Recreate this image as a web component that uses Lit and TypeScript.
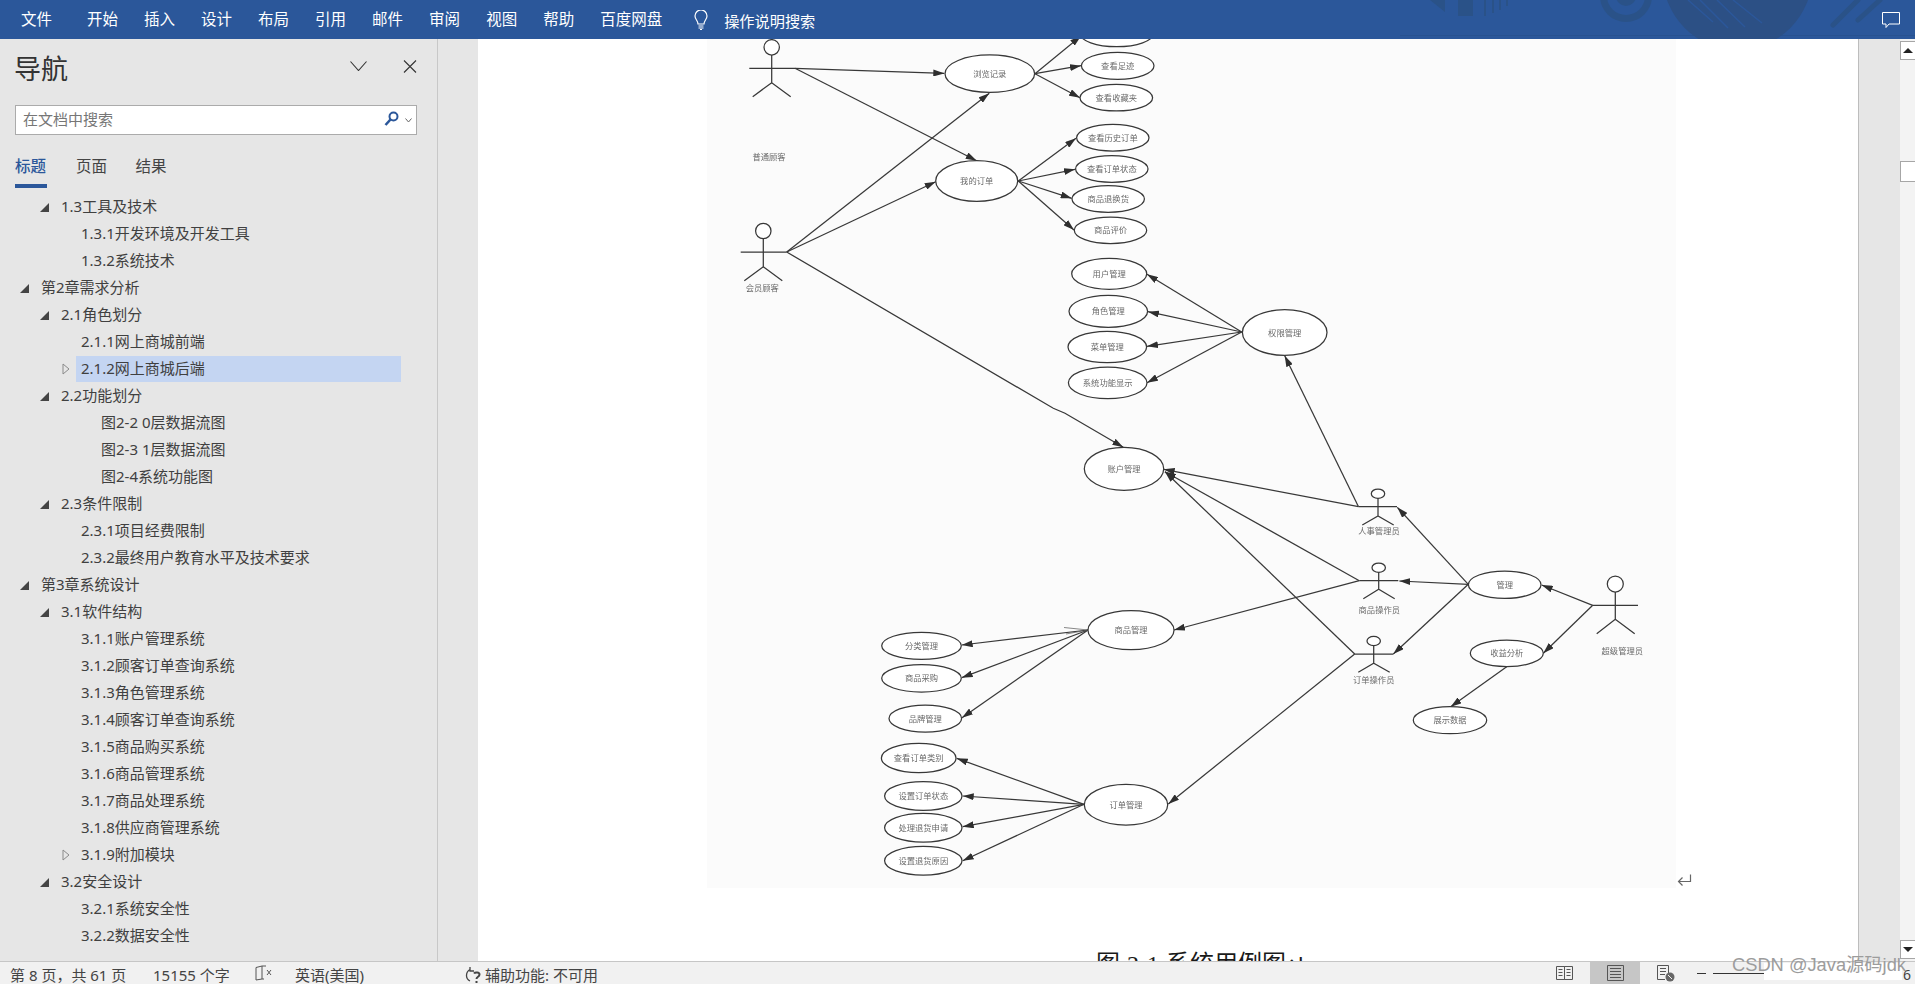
import { LitElement, html, css, svg } from "lit";
import { customElement } from "lit/decorators.js";

const MENU = ["开始", "插入", "设计", "布局", "引用", "邮件", "审阅", "视图", "帮助", "百度网盘"];

type Row = [number, string, ("open" | "closed" | "")?, boolean?];
const TREE: Row[] = [
  [2, "1.3工具及技术", "open"],
  [3, "1.3.1开发环境及开发工具"],
  [3, "1.3.2系统技术"],
  [1, "第2章需求分析", "open"],
  [2, "2.1角色划分", "open"],
  [3, "2.1.1网上商城前端"],
  [3, "2.1.2网上商城后端", "closed", true],
  [2, "2.2功能划分", "open"],
  [4, "图2-2 0层数据流图"],
  [4, "图2-3 1层数据流图"],
  [4, "图2-4系统功能图"],
  [2, "2.3条件限制", "open"],
  [3, "2.3.1项目经费限制"],
  [3, "2.3.2最终用户教育水平及技术要求"],
  [1, "第3章系统设计", "open"],
  [2, "3.1软件结构", "open"],
  [3, "3.1.1账户管理系统"],
  [3, "3.1.2顾客订单查询系统"],
  [3, "3.1.3角色管理系统"],
  [3, "3.1.4顾客订单查询系统"],
  [3, "3.1.5商品购买系统"],
  [3, "3.1.6商品管理系统"],
  [3, "3.1.7商品处理系统"],
  [3, "3.1.8供应商管理系统"],
  [3, "3.1.9附加模块", "closed"],
  [2, "3.2安全设计", "open"],
  [3, "3.2.1系统安全性"],
  [3, "3.2.2数据安全性"],
];

// ellipses: cx, cy, rx, ry, label
const ELLIPSES: [number, number, number, number, string][] = [
  [989.8, 73.7, 44.8, 18.7, "浏览记录"],
  [976.7, 181, 41, 20.3, "我的订单"],
  [1116.7, 33.4, 36.7, 13.3, ""],
  [1117.7, 65.8, 36.3, 13.5, "查看足迹"],
  [1116.3, 97.7, 36.3, 13.3, "查看收藏夹"],
  [1112.8, 137.7, 36.2, 13.3, "查看历史订单"],
  [1111.8, 169, 36.2, 13.3, "查看订单状态"],
  [1108.2, 199, 36.2, 13.3, "商品退换货"],
  [1110.5, 230.3, 36.2, 13.3, "商品评价"],
  [1109.2, 273.8, 37.5, 15.5, "用户管理"],
  [1108.3, 311.3, 39.3, 16, "角色管理"],
  [1107.3, 347, 39.3, 15.7, "菜单管理"],
  [1107.7, 382.8, 39.3, 15.8, "系统功能显示"],
  [1284.7, 332.5, 42.3, 22.8, "权限管理"],
  [1124, 468.8, 39.7, 21.5, "账户管理"],
  [1504.7, 584.7, 36.3, 13.7, "管理"],
  [1506.8, 653.3, 36.5, 13.3, "收益分析"],
  [1450, 720.2, 36.7, 13.5, "展示数据"],
  [1131, 630.2, 43, 19.5, "商品管理"],
  [921.5, 645.8, 39.8, 13.5, "分类管理"],
  [921.5, 678.3, 39.8, 13.7, "商品采购"],
  [925.3, 718.5, 36.3, 13.5, "品牌管理"],
  [918.7, 758, 37.3, 14.7, "查看订单类别"],
  [923.3, 796, 38.7, 14.3, "设置订单状态"],
  [923.3, 827.7, 38.7, 14.3, "处理退货申请"],
  [923.3, 860.7, 38.7, 14.3, "设置退货原因"],
  [1126, 804.7, 41.7, 20.3, "订单管理"],
];

// arrows: polyline points, ending with an arrowhead
const ARROWS: number[][] = [
  [795, 68.3, 944.3, 73.3],
  [795, 68.3, 976.7, 160.7],
  [786.7, 252, 989.3, 93.3],
  [786.7, 252, 935.7, 181.7],
  [786.7, 252, 1053.3, 408.3, 1065, 413.3, 1123.3, 447.3],
  [1035, 73.7, 1081, 36],
  [1035, 73.7, 1081, 65.7],
  [1035, 73.7, 1080, 97.7],
  [1018.3, 181, 1076, 138.3],
  [1018.3, 181, 1075, 169.3],
  [1018.3, 181, 1071.7, 198.3],
  [1018.3, 181, 1074, 230],
  [1241.7, 332, 1147, 274.3],
  [1241.7, 332, 1148, 311.7],
  [1241.7, 332, 1147, 346.3],
  [1241.7, 332, 1147, 382.7],
  [1358.5, 506.7, 1163.7, 469.3],
  [1358.5, 506.7, 1284.7, 355.7],
  [1359.3, 580.7, 1165, 471.7],
  [1359.3, 580.7, 1174, 630],
  [1354.7, 654, 1165, 471.7],
  [1354.7, 654, 1168.3, 804],
  [1468.3, 584.3, 1397.3, 507.3],
  [1468.3, 584.3, 1399.3, 581],
  [1468.3, 584.3, 1393.3, 654],
  [1592.7, 605.3, 1541.7, 585],
  [1592.7, 605.3, 1543.3, 653.3],
  [1506.7, 666.7, 1450.7, 706.7],
  [1088, 630, 961.7, 645],
  [1088, 630, 961.7, 677.7],
  [1088, 630, 962, 717.7],
  [1084, 804.3, 956.7, 758.3],
  [1084, 804.3, 962.7, 796],
  [1084, 804.3, 962.7, 826.7],
  [1084, 804.3, 962.7, 860.7],
];

// actors: head cx, cy, rx, ry, arm x1, x2, arm y, hip y, leg y, leg x1, x2, label x, label y, label
const ACTORS: [number, number, number, number, number, number, number, number, number, number, number, number, number, string][] = [
  [771.7, 47.3, 7.7, 7.7, 749.3, 795, 68.3, 82.7, 96.7, 752.7, 790.7, 769, 157.3, "普通顾客"],
  [763.3, 231, 7.7, 7.7, 740.7, 786.7, 252, 266.7, 280.7, 744.3, 782.3, 762.3, 288, "会员顾客"],
  [1378, 493.7, 6.7, 4.7, 1358.7, 1397, 506.7, 516, 525, 1362.3, 1393.7, 1379, 531, "人事管理员"],
  [1378.7, 567.7, 6.7, 4.7, 1359.3, 1398.3, 580.7, 589.3, 598.7, 1363.3, 1394.7, 1379.3, 610.3, "商品操作员"],
  [1373.7, 641, 6.7, 4.7, 1354.7, 1393.3, 654, 663.3, 672.3, 1358.3, 1389.7, 1373.7, 680, "订单操作员"],
  [1615.3, 584, 8, 8, 1592.7, 1638, 605.3, 619.3, 633.7, 1596.7, 1634.7, 1622.3, 651, "超级管理员"],
];

@customElement("app-root")
export class AppRoot extends LitElement {
  static styles = css`
    :host {
      display: grid;
      position: relative;
      width: 1915px;
      height: 984px;
      overflow: hidden;
      grid-template-rows: 39px 922px 23px;
      font-family: "Noto Sans", "Noto Sans CJK SC", sans-serif;
      color: #3f3f3f;
      background: #e6e6e6;
    }
    .ribbon {
      position: relative;
      display: flex;
      align-items: center;
      background: #2b579a;
      color: #fff;
      font-size: 15.5px;
      padding-left: 21px;
      padding-bottom: 2px;
      box-sizing: border-box;
      overflow: hidden;
    }
    .file { margin-right: 35px; }
    .menu { display: flex; gap: 26px; }
    .bulb { width: 16px; height: 20px; margin: 2px 15px 0 31px; }
    .tell { font-size: 15.2px; position: relative; top: 1px; }
    .deco { position: absolute; left: 1400px; top: 0; width: 515px; height: 39px; }
    .main { display: flex; min-height: 0; overflow: hidden; }
    .nav {
      width: 437px;
      flex: none;
      box-sizing: content-box;
      border-right: 1px solid #c8c8c8;
      background: #e6e6e6;
    }
    .nav-head {
      display: flex;
      align-items: center;
      height: 32px;
      margin: 14px 0 20px;
      padding-left: 14px;
    }
    .nav-title { font-size: 27px; line-height: 32px; color: #333; width: 336px; }
    .chev { width: 17px; height: 10px; margin-right: 36px; margin-top: -6px; }
    .close { width: 14px; height: 13px; margin-top: -6px; }
    .search {
      display: flex;
      align-items: center;
      box-sizing: border-box;
      width: 402px;
      height: 30px;
      margin-left: 15px;
      padding-left: 7px;
      padding-bottom: 3px;
      border: 1px solid #ababab;
      background: #fff;
      color: #767676;
      font-size: 15px;
    }
    .search span { flex: 1; }
    .lens { width: 15px; height: 15px; margin-right: 6px; }
    .drop { width: 7px; height: 5px; margin-right: 4px; margin-top: 3px; }
    .tabs { display: flex; margin: 18px 0 6px 15px; height: 35px; font-size: 15.5px; }
    .tab { width: 61px; line-height: 27px; color: #444; box-sizing: border-box; }
    .tab:nth-child(2) { width: 59.5px; }
    .tab.on { color: #2b579a; }
    .tab.on span { display: inline-block; height: 35px; width: 32px; box-sizing: border-box; border-bottom: 4px solid #2b579a; font-weight: 500; }
    .row { display: flex; box-sizing: border-box; width: 401px; height: 27px; font-size: 15px; line-height: 24px; color: #404040; }
    .l1 { padding-left: 20px; }
    .l2 { padding-left: 40px; }
    .l3 { padding-left: 61px; }
    .l4 { padding-left: 80px; }
    .tw { flex: none; width: 14px; height: 26px; display: flex; align-items: center; }
    .tw svg { display: block; }
    .l3 .tw { width: 15px; }
    .lbl { flex: 1; height: 26px; padding-left: 7px; white-space: nowrap; }
    .l3 .lbl { padding-left: 5px; }
    .lbl.sel { background: #c4d5f2; }
    .gutter { width: 40px; flex: none; background: #e6e6e6; }
    .page { position: relative; width: 1380px; flex: none; background: #fff; overflow: hidden; padding-left: 229px; box-sizing: border-box; }
    .figure { display: flex; }
    .img { width: 969px; height: 849px; flex: none; background: #fbfbfb; overflow: hidden; }
    .img svg { display: block; width: 969px; height: 849px; filter: blur(0.3px); }
    .mark { width: 15px; height: 13px; margin: 835px 0 0 1px; flex: none; }
    .caption {
      margin: 61px 0 0 389px;
      font-family: "Liberation Serif", "Noto Sans CJK SC", serif;
      font-size: 24px;
      line-height: 30px;
      word-spacing: 1px;
      color: #1a1a1a;
      white-space: nowrap;
    }
    .rgut { width: 42px; flex: none; box-sizing: border-box; border-left: 1px solid #bdbdbd; background: #e6e6e6; }
    .sb { width: 15px; flex: none; background: #f3f3f3; display: flex; flex-direction: column; }
    .sb-btn {
      box-sizing: border-box;
      height: 19px;
      background: #fff;
      border: 1px solid #a6a6a6;
      border-right: 0;
      display: flex;
      align-items: center;
      justify-content: center;
    }
    .up { margin-top: 2px; }
    .down { margin-top: auto; margin-bottom: 2px; }
    .up i { border: 5px solid transparent; border-bottom: 5px solid #222; border-top: 0; }
    .down i { border: 5px solid transparent; border-top: 5px solid #222; border-bottom: 0; }
    .thumb { box-sizing: border-box; height: 21px; margin-top: 101px; background: #fff; border: 1px solid #a6a6a6; border-right: 0; }
    .status {
      display: flex;
      align-items: center;
      box-sizing: border-box;
      border-top: 1px solid #c6c6c6;
      background: #f1f1f1;
      padding-left: 10px;
      font-size: 15px;
      color: #444;
      white-space: nowrap;
      position: relative;
    }
    .status > span { padding-top: 3px; }
    .st-page { width: 143px; }
    .st-words { width: 102px; }
    .st-book { width: 40px; height: 16px; display: block; }
    .st-lang { width: 170px; }
    .st-acc { width: 20px; height: 18px; display: block; margin-top: 4px; }
    .views { margin-left: auto; display: flex; align-items: center; height: 22px; }
    .vi { width: 17px; height: 16px; display: block; }
    .cell { width: 50px; height: 22px; margin: 0 17px; background: #c6c6c6; display: flex; align-items: center; justify-content: center; }
    .web { width: 18px; height: 17px; display: block; }
    .minus { width: 9px; height: 1px; background: #333; margin-left: 22px; }
    .slider { position: relative; width: 186px; height: 1px; margin-left: 7px; background: #333; }
    .knob { position: absolute; left: 66px; top: 6px; width: 6px; height: 1px; background: #333; }
    .pct { position: relative; z-index: 2; width: 12px; margin-left: 4px; font-size: 14px; padding-top: 3px; }
    .wm-bg { position: absolute; left: 1764px; top: 963px; width: 138px; height: 17px; background: #fff; }
    .wm {
      position: absolute;
      left: 1732px;
      top: 954px;
      font-family: "Liberation Sans", "Noto Sans CJK SC", sans-serif;
      font-size: 18.3px;
      line-height: 22px;
      color: #9c9c9c;
      white-space: nowrap;
    }
  `;

  private diagram() {
    const lines = ARROWS.map(
      (p) => svg`<polyline points=${p.join(" ")} fill="none" stroke="#383838" stroke-width="1.25" marker-end="url(#ah)"></polyline>`
    );
    const ells = ELLIPSES.map(
      ([cx, cy, rx, ry, t]) => svg`
        <ellipse cx=${cx} cy=${cy} rx=${rx} ry=${ry} fill="#fff" stroke="#383838" stroke-width="1.25"></ellipse>
        <text x=${cx} y=${cy + 3} text-anchor="middle" font-size="8.3" fill="#6a6a6a">${t}</text>`
    );
    const actors = ACTORS.map(
      ([hx, hy, rx, ry, a1, a2, ay, hip, leg, l1, l2, tx, ty, t]) => svg`
        <ellipse cx=${hx} cy=${hy} rx=${rx} ry=${ry} fill="#fff" stroke="#383838" stroke-width="1.25"></ellipse>
        <path d="M${hx} ${hy + ry}V${hip}M${a1} ${ay}H${a2}M${l1} ${leg}L${hx} ${hip}L${l2} ${leg}" fill="none" stroke="#383838" stroke-width="1.25"></path>
        <text x=${tx} y=${ty + 3} text-anchor="middle" font-size="8.3" fill="#6a6a6a">${t}</text>`
    );
    return html`<svg viewBox="707 39 969 849" aria-label="系统用例图">
      <defs>
        <marker id="ah" viewBox="0 0 11 7" markerWidth="11" markerHeight="7" markerUnits="userSpaceOnUse" refX="11" refY="3.5" orient="auto">
          <path d="M0 0L11 3.500L0 7Z" fill="#2e2e2e"></path>
        </marker>
      </defs>
      ${lines}
      <path d="M1064 627.5L1088 630L1066 634" fill="none" stroke="#555" stroke-width="0.7"></path>
      ${ells}${actors}
    </svg>`;
  }

  private twisty(kind?: string) {
    if (kind === "open")
      return html`<svg width="9" height="9" viewBox="0 0 9 9"><path d="M9 0V9H0Z" fill="#444"></path></svg>`;
    if (kind === "closed")
      return html`<svg width="8" height="12" viewBox="0 0 8 12" style="margin-left:1px"><path d="M1 1L7 6L1 11Z" fill="none" stroke="#8a8a8a"></path></svg>`;
    return "";
  }

  render() {
    return html`
      <div class="ribbon">
        <span class="file">文件</span>
        <div class="menu">${MENU.map((m) => html`<span>${m}</span>`)}</div>
        <svg class="bulb" viewBox="0 0 16 20" fill="none" stroke="#fff" stroke-width="1.2">
          <path d="M5 14C5 10.5 2 9.5 2 6a6 6 0 0 1 12 0c0 3.5-3 4.500-3 8Z"></path>
          <path d="M5.500 16h5M5.500 18h5M7 19.500h2"></path>
        </svg>
        <span class="tell">操作说明搜索</span>
        <svg class="deco" viewBox="1400 0 515 39">
          <path d="M1400 35.500H1915" stroke="#285290" stroke-width="1"></path>
          <g fill="#2a5288">
            <path d="M1430 0H1445V12Z"></path>
            <rect x="1458" y="0" width="15" height="16"></rect>
            <rect x="1484" y="0" width="2" height="16"></rect>
            <rect x="1492" y="0" width="2" height="13"></rect>
            <rect x="1499" y="0" width="2" height="10"></rect>
            <rect x="1506" y="0" width="2" height="6"></rect>
          </g>
          <circle cx="1626" cy="-4" r="26" fill="#2a5288"></circle>
          <circle cx="1626" cy="-4" r="19" fill="#2b579a"></circle>
          <circle cx="1626" cy="-4" r="10" fill="#2a5288"></circle>
          <circle cx="1737.500" cy="-25" r="74.800" fill="#2c5085"></circle>
          <path d="M1688 0L1713 22M1700 0L1728 28M1717 0L1745 27M1733 0L1762 23" stroke="#2b579a" stroke-width="1.5"></path>
          <path d="M1833 25L1858 0M1858 20L1880 0" stroke="#2a5288" stroke-width="5" stroke-linecap="round"></path>
          <path d="M1882.500 12.500H1899.500V24H1889L1886 27.500V24H1882.500Z" fill="none" stroke="#fff"></path>
        </svg>
      </div>

      <div class="main">
        <aside class="nav">
          <div class="nav-head">
            <div class="nav-title">导航</div>
            <svg class="chev" viewBox="0 0 17 10" fill="none" stroke="#333" stroke-width="1.100"><path d="M.5.5L8.500 9.500L16.500.5"></path></svg>
            <svg class="close" viewBox="0 0 14 13" fill="none" stroke="#333" stroke-width="1.100"><path d="M1 .5L13 12.500M13 .5L1 12.500"></path></svg>
          </div>
          <div class="search">
            <span>在文档中搜索</span>
            <svg class="lens" viewBox="0 0 15 15" fill="none" stroke="#2b579a" stroke-width="2"><circle cx="9.500" cy="5.500" r="4"></circle><path d="M6.500 8.500L1.500 14" stroke-width="2.600"></path></svg>
            <svg class="drop" viewBox="0 0 7 5" fill="none" stroke="#666"><path d="M.5.500L3.500 4L6.500.5"></path></svg>
          </div>
          <div class="tabs">
            <div class="tab on"><span>标题</span></div>
            <div class="tab">页面</div>
            <div class="tab">结果</div>
          </div>
          <div class="tree">
            ${TREE.map(
              ([lvl, text, kind, sel]) => html`<div class="row l${lvl}">
                <div class="tw">${this.twisty(kind)}</div>
                <div class="lbl ${sel ? "sel" : ""}">${text}</div>
              </div>`
            )}
          </div>
        </aside>
        <div class="gutter"></div>
        <div class="page">
          <div class="figure">
            <div class="img">${this.diagram()}</div>
            <svg class="mark" viewBox="0 0 15 13" fill="none" stroke="#666" stroke-width="1.200">
              <path d="M13.500 .5V7.500H1.500M5.500 3.500L1.500 7.500L5.500 11.500"></path>
            </svg>
          </div>
          <div class="caption">图 2-1 系统用例图↵</div>
        </div>
        <div class="rgut"></div>
        <div class="sb">
          <div class="sb-btn up"><i></i></div>
          <div class="thumb"></div>
          <div class="sb-btn down"><i></i></div>
        </div>
      </div>

      <footer class="status">
        <span class="st-page">第 8 页，共 61 页</span>
        <span class="st-words">15155 个字</span>
        <svg class="st-book" viewBox="0 0 40 16" fill="none" stroke="#555">
          <path d="M1 2.500L7 1V14L1 15ZM7 1H11M7 14H9" stroke-width="1"></path>
          <path d="M12 5L16 10M16 5L12 10" stroke-width="1"></path>
        </svg>
        <span class="st-lang">英语(美国)</span>
        <svg class="st-acc" viewBox="0 0 20 18" fill="none" stroke="#444" stroke-width="1.300">
          <path d="M5 3.500C2.500 5 1.500 7 1.500 9.500C1.500 12 3 14 5 15M5 1V5H9"></path>
          <path d="M9 7.500C10 6 14.500 6 14.500 8.500C14.500 11 11.500 10.500 11.500 13M11.500 15V17" stroke-width="2"></path>
        </svg>
        <span>辅助功能: 不可用</span>
        <div class="views">
          <svg class="vi" viewBox="0 0 17 16" fill="none" stroke="#555">
            <path d="M.5 1.500H8.500V14.500H.5ZM8.500 1.500H16.500V14.500H8.500ZM2.500 4.500H6.500M2.500 7.500H6.500M2.500 10.500H6.500M10.500 4.500H14.500M10.500 7.500H14.500M10.500 10.500H14.500"></path>
          </svg>
          <div class="cell">
            <svg class="vi" viewBox="0 0 17 16" fill="none" stroke="#555">
              <path d="M.5.5H16.500V15.500H.5ZM3 3.500H14M3 6.500H14M3 9.500H14M3 12.500H14"></path>
            </svg>
          </div>
          <svg class="web" viewBox="0 0 18 17" fill="none" stroke="#555">
            <path d="M.5.5H11.500V9M.5.5V14.500H8M3 3.500H9M3 6.500H9M3 9.500H8"></path>
            <circle cx="13" cy="12" r="4.500" fill="#666" stroke="none"></circle>
            <path d="M11 10L15 14" stroke="#f1f1f1"></path>
          </svg>
          <div class="minus"></div>
          <div class="slider"><div class="knob"></div></div>
          <span class="pct">6</span>
        </div>
      </footer>
      <div class="wm-bg"></div>
      <div class="wm">CSDN @Java源码jdk</div>
    `;
  }
}
